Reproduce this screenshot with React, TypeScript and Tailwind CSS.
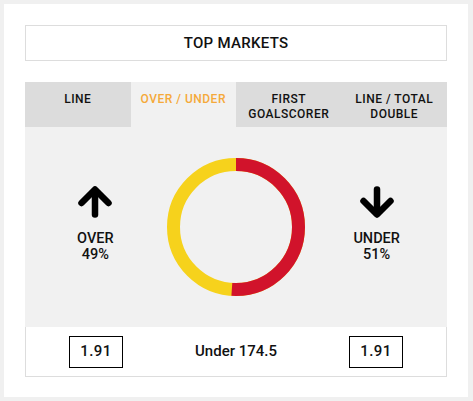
import React from 'react';

const tabs = [
  { label: 'LINE', active: false },
  { label: 'OVER / UNDER', active: true },
  { label: 'FIRST GOALSCORER', active: false },
  { label: 'LINE / TOTAL DOUBLE', active: false },
];

const Arrow = ({ down = false }: { down?: boolean }) => (
  <svg
    width="36"
    height="32"
    viewBox="0 0 36 32"
    className={down ? 'rotate-180' : ''}
    fill="none"
    stroke="#000"
    strokeWidth="6.5"
    strokeLinecap="round"
    strokeLinejoin="round"
  >
    <path d="M4.5 17 18 3.5 31.5 17" />
    <path d="M18 5v23.5" />
  </svg>
);

const Donut = ({ over }: { over: number }) => {
  const r = 62.5;
  const c = 2 * Math.PI * r;
  const red = ((100 - over) / 100) * c;
  return (
    <svg width="138" height="138" viewBox="0 0 138 138">
      <circle cx="69" cy="69" r={r} fill="none" stroke="#f6d21c" strokeWidth="13" />
      <circle
        cx="69"
        cy="69"
        r={r}
        fill="none"
        stroke="#d1132b"
        strokeWidth="13"
        strokeDasharray={`${red} ${c}`}
        transform="rotate(-90 69 69)"
      />
    </svg>
  );
};

export default function App() {
  return (
    <div className="h-[401px] w-[473px] bg-[#f0f0f0] pt-[4px] pl-[4px] pr-[5px] pb-[4px] font-['Roboto',sans-serif] text-[#111]">
      <div className="h-[393px] bg-white px-[21px] pt-[21px]">
        {/* title */}
        <div className="flex h-[36px] items-center justify-center border border-[#dddddd] text-[15px] font-medium tracking-[0.3px]">
          TOP MARKETS
        </div>

        {/* tabs */}
        <div className="mt-[21px] grid h-[45px] grid-cols-4">
          {tabs.map((t) => (
            <div
              key={t.label}
              className={`flex justify-center px-2 pt-[10px] text-center text-[12px] leading-[15px] font-medium tracking-[0.5px] ${
                t.active ? 'bg-[#f1f1f1] text-[#f5a93a]' : 'bg-[#dcdcdc]'
              }`}
            >
              <span className={t.label === 'OVER / UNDER' ? 'whitespace-nowrap' : 'max-w-[90px]'}>{t.label}</span>
            </div>
          ))}
        </div>

        {/* chart panel */}
        <div className="grid h-[200px] grid-cols-3 items-center bg-[#f1f1f1]">
          <div className="flex flex-col items-center pb-[6px]">
            <Arrow />
            <div className="mt-[13px] text-center text-[14.5px] leading-[16px] font-medium">
              OVER
              <br />
              49%
            </div>
          </div>
          <div className="flex justify-center pb-[1px]">
            <Donut over={49} />
          </div>
          <div className="flex flex-col items-center pb-[6px]">
            <Arrow down />
            <div className="mt-[13px] text-center text-[14.5px] leading-[16px] font-medium">
              UNDER
              <br />
              51%
            </div>
          </div>
        </div>

        {/* odds row */}
        <div className="grid h-[50px] grid-cols-3 items-center border border-t-0 border-[#dddddd]">
          <div className="flex justify-center">
            <div className="flex h-[32px] w-[54px] items-center justify-center border border-black text-[15px] font-medium tracking-[0.5px]">
              1.91
            </div>
          </div>
          <div className="text-center text-[15px] font-medium">Under 174.5</div>
          <div className="flex justify-center">
            <div className="flex h-[32px] w-[54px] items-center justify-center border border-black text-[15px] font-medium tracking-[0.5px]">
              1.91
            </div>
          </div>
        </div>
      </div>
    </div>
  );
}
